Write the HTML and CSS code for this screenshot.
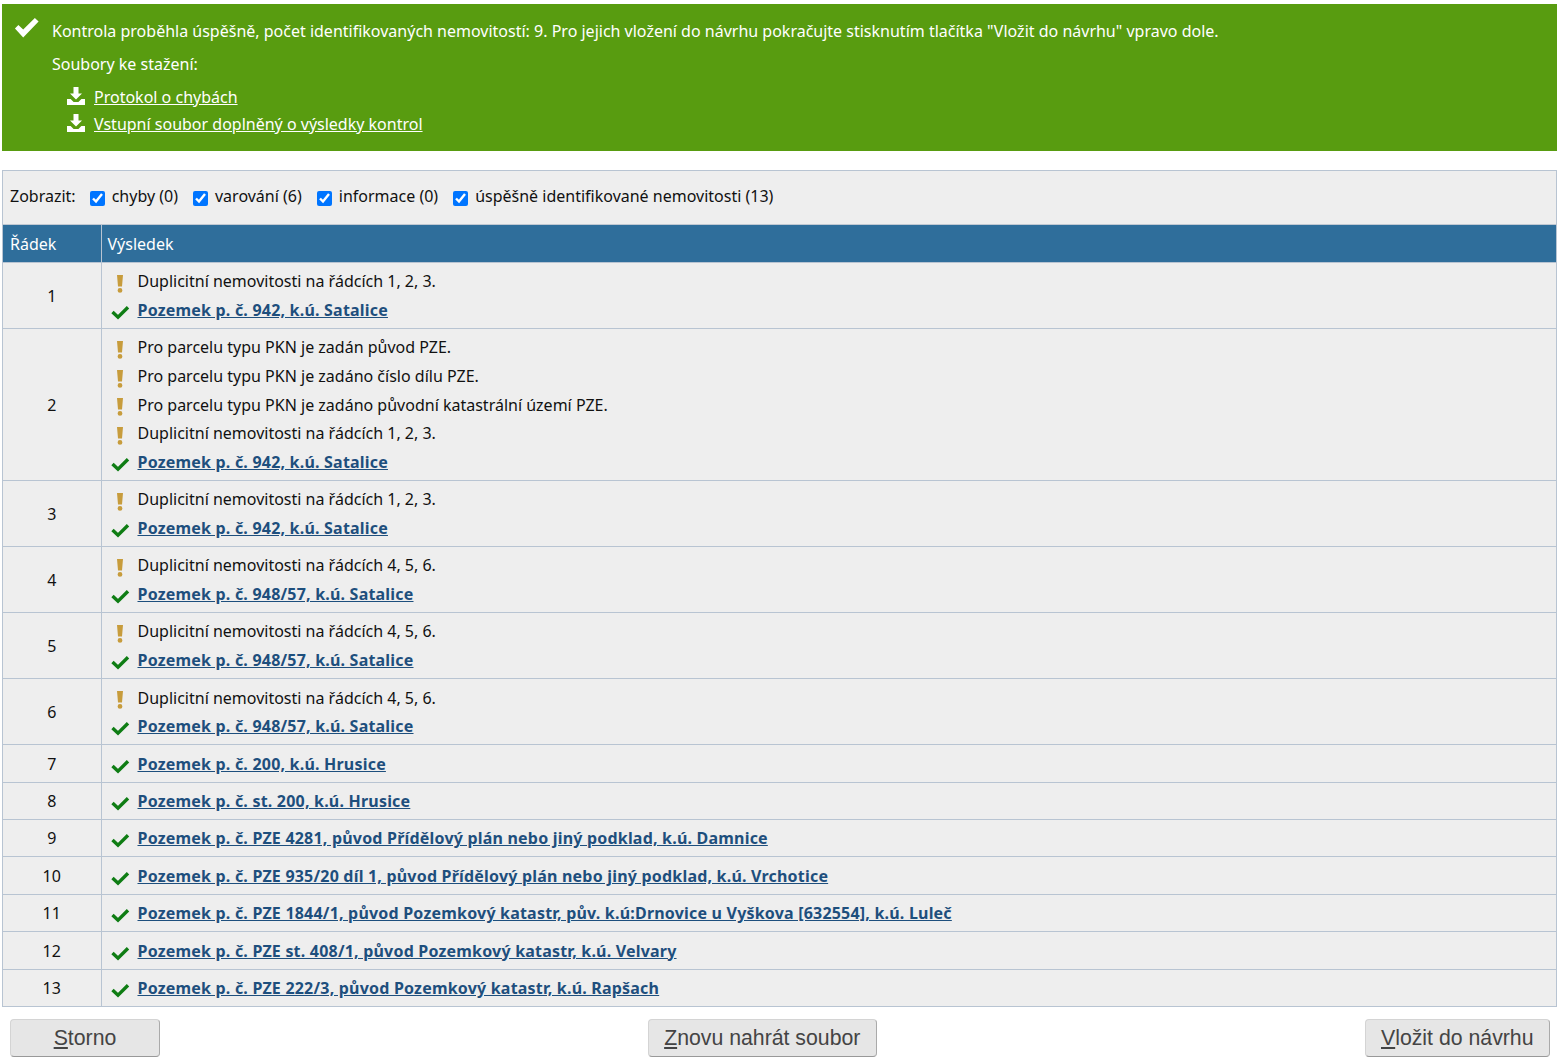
FILE: index.html
```html
<!DOCTYPE html>
<html lang="cs">
<head>
<meta charset="utf-8">
<title>Kontrola</title>
<link rel="stylesheet" href="styles.css">
</head>
<body>
<svg class="defs" width="0" height="0" aria-hidden="true">
  <symbol id="ok" viewBox="0 0 24 20"><path d="M1.5 10.5 4.6 7.3 9 11.4 19.6.9 23 4.2 9 18.6Z"/></symbol>
  <symbol id="tick" viewBox="0 0 19 16"><path d="M1.5 8 7 13.2 17 3.2" fill="none" stroke="currentColor" stroke-width="3.4"/></symbol>
  <symbol id="warn" viewBox="0 0 8 18"><path d="M1 0h6L6 11.5H2ZM4 13a2.4 2.4 0 1 1 0 4.8A2.4 2.4 0 0 1 4 13Z"/></symbol>
  <symbol id="dl" viewBox="0 0 18 18"><path d="M6.5 0h5v6.5H15L9 12.5 3 6.5h3.5ZM0 12h3.6l3 3h4.8l3-3H18v6H0Z"/></symbol>
</svg>
<section class="alert">
  <svg class="alert-icon"><use href="#ok"/></svg>
  <div class="alert-body">
    <p>Kontrola proběhla úspěšně, počet identifikovaných nemovitostí: 9. Pro jejich vložení do návrhu pokračujte stisknutím tlačítka "Vložit do návrhu" vpravo dole.</p>
    <p>Soubory ke stažení:</p>
    <ul class="files">
      <li><svg class="dl"><use href="#dl"/></svg><a href="#">Protokol o chybách</a></li>
      <li><svg class="dl"><use href="#dl"/></svg><a href="#">Vstupní soubor doplněný o výsledky kontrol</a></li>
    </ul>
  </div>
</section>
<section class="panel">
  <div class="filters">
    <span class="filters-label">Zobrazit:</span>
    <label><input type="checkbox" checked>chyby (0)</label>
    <label><input type="checkbox" checked>varování (6)</label>
    <label><input type="checkbox" checked>informace (0)</label>
    <label><input type="checkbox" checked>úspěšně identifikované nemovitosti (13)</label>
  </div>
  <table>
    <thead><tr><th class="c1">Řádek</th><th>Výsledek</th></tr></thead>
    <tbody>
      <tr><td class="c1">1</td><td>
        <div class="m"><svg class="w"><use href="#warn"/></svg>Duplicitní nemovitosti na řádcích 1, 2, 3.</div>
        <div class="m"><svg class="k"><use href="#tick"/></svg><a href="#">Pozemek p. č. 942, k.ú. Satalice</a></div>
      </td></tr>
      <tr><td class="c1">2</td><td>
        <div class="m"><svg class="w"><use href="#warn"/></svg>Pro parcelu typu PKN je zadán původ PZE.</div>
        <div class="m"><svg class="w"><use href="#warn"/></svg>Pro parcelu typu PKN je zadáno číslo dílu PZE.</div>
        <div class="m"><svg class="w"><use href="#warn"/></svg>Pro parcelu typu PKN je zadáno původní katastrální území PZE.</div>
        <div class="m"><svg class="w"><use href="#warn"/></svg>Duplicitní nemovitosti na řádcích 1, 2, 3.</div>
        <div class="m"><svg class="k"><use href="#tick"/></svg><a href="#">Pozemek p. č. 942, k.ú. Satalice</a></div>
      </td></tr>
      <tr><td class="c1">3</td><td>
        <div class="m"><svg class="w"><use href="#warn"/></svg>Duplicitní nemovitosti na řádcích 1, 2, 3.</div>
        <div class="m"><svg class="k"><use href="#tick"/></svg><a href="#">Pozemek p. č. 942, k.ú. Satalice</a></div>
      </td></tr>
      <tr><td class="c1">4</td><td>
        <div class="m"><svg class="w"><use href="#warn"/></svg>Duplicitní nemovitosti na řádcích 4, 5, 6.</div>
        <div class="m"><svg class="k"><use href="#tick"/></svg><a href="#">Pozemek p. č. 948/57, k.ú. Satalice</a></div>
      </td></tr>
      <tr><td class="c1">5</td><td>
        <div class="m"><svg class="w"><use href="#warn"/></svg>Duplicitní nemovitosti na řádcích 4, 5, 6.</div>
        <div class="m"><svg class="k"><use href="#tick"/></svg><a href="#">Pozemek p. č. 948/57, k.ú. Satalice</a></div>
      </td></tr>
      <tr><td class="c1">6</td><td>
        <div class="m"><svg class="w"><use href="#warn"/></svg>Duplicitní nemovitosti na řádcích 4, 5, 6.</div>
        <div class="m"><svg class="k"><use href="#tick"/></svg><a href="#">Pozemek p. č. 948/57, k.ú. Satalice</a></div>
      </td></tr>
      <tr><td class="c1">7</td><td><div class="m"><svg class="k"><use href="#tick"/></svg><a href="#">Pozemek p. č. 200, k.ú. Hrusice</a></div></td></tr>
      <tr><td class="c1">8</td><td><div class="m"><svg class="k"><use href="#tick"/></svg><a href="#">Pozemek p. č. st. 200, k.ú. Hrusice</a></div></td></tr>
      <tr><td class="c1">9</td><td><div class="m"><svg class="k"><use href="#tick"/></svg><a href="#">Pozemek p. č. PZE 4281, původ Přídělový plán nebo jiný podklad, k.ú. Damnice</a></div></td></tr>
      <tr><td class="c1">10</td><td><div class="m"><svg class="k"><use href="#tick"/></svg><a href="#">Pozemek p. č. PZE 935/20 díl 1, původ Přídělový plán nebo jiný podklad, k.ú. Vrchotice</a></div></td></tr>
      <tr><td class="c1">11</td><td><div class="m"><svg class="k"><use href="#tick"/></svg><a href="#">Pozemek p. č. PZE 1844/1, původ Pozemkový katastr, pův. k.ú:Drnovice u Vyškova [632554], k.ú. Luleč</a></div></td></tr>
      <tr><td class="c1">12</td><td><div class="m"><svg class="k"><use href="#tick"/></svg><a href="#">Pozemek p. č. PZE st. 408/1, původ Pozemkový katastr, k.ú. Velvary</a></div></td></tr>
      <tr><td class="c1">13</td><td><div class="m"><svg class="k"><use href="#tick"/></svg><a href="#">Pozemek p. č. PZE 222/3, původ Pozemkový katastr, k.ú. Rapšach</a></div></td></tr>
    </tbody>
  </table>
</section>
<footer class="actions">
  <button type="button"><u>S</u>torno</button>
  <button type="button"><u>Z</u>novu nahrát soubor</button>
  <button type="button"><u>V</u>ložit do návrhu</button>
</footer>
</body>
</html>
```
FILE: styles.css
```css
html, body { margin: 0; padding: 0; background: #fff; }
body {
  padding: 4px 1px 0 2px;
  font-family: "Noto Sans", "Open Sans", sans-serif;
  font-size: 16px;
  color: #111;
  height: 1056px;
  overflow: hidden;
}
.defs { position: absolute; }
svg { fill: currentColor; }

.alert {
  display: flex;
  background: #589c10;
  color: #fff;
  height: 147px;
  box-sizing: border-box;
  padding: 16px 0 0 11px;
}
.alert a { color: #fff; }
.alert-icon { width: 27px; height: 22px; margin: -3px 12px 0 0; flex: none; }
.alert-body { flex: 1; }
.alert-body p { margin: 0 0 11px; line-height: 22px; }
.files { list-style: none; margin: 0; padding: 0 0 0 15px; }
.files li { height: 27px; line-height: 22px; display: flex; align-items: flex-start; }
.dl { width: 18px; height: 18px; margin: 1px 9px 0 0; flex: none; }

.panel {
  margin-top: 19px;
  border: 1px solid #b8c4d2;
  background: #eee;
}
.filters {
  height: 54px;
  display: flex;
  align-items: center;
  padding: 0 0 4px 7px;
  gap: 15px;
  box-sizing: border-box;
  border-bottom: 1px solid #c0c8d2;
}
.filters-label { margin-right: -1px; }
.filters label { display: flex; align-items: center; }
.filters input { width: 15px; height: 15px; margin: 6px 7px 0 0; accent-color: #0075ff; }

table { width: 100%; border-collapse: collapse; table-layout: fixed; }
th, td { border: 1px solid #b8c4d2; padding: 4px 6px 3.74px; text-align: left; font-weight: 400; }
tr > :first-child { border-left: 0; }
tr > :last-child { border-right: 0; }
tbody tr:last-child td { border-bottom: 0; }
th {
  background: #2f6e9b;
  color: #fff;
  height: 37px;
  padding: 1px 6px 0;
  box-sizing: border-box;
  border-top: 0;
  border-bottom: 0;
  line-height: 36px;
}
th.c1 { padding-left: 7px; }
.c1 { width: 98px; }
td.c1 { text-align: center; }
.m {
  display: flex;
  align-items: center;
  height: 28.67px;
  padding-left: 3px;
}
.m a { color: #1e4f7d; font-weight: 700; letter-spacing: 0.2px; }
.w { width: 8px; height: 18px; margin: 5px 14px 0 5px; color: #c79c3c; flex: none; }
.k { width: 19px; height: 16px; margin: 4px 8px 0 0; color: #0f7d14; flex: none; }

.actions {
  display: flex;
  justify-content: space-between;
  padding: 12px 7px 0 8px;
}
button {
  font-family: "Liberation Sans", Arial, sans-serif;
  font-size: 21.28px;
  color: #444;
  height: 38px;
  padding: 1px 15.5px 0;
  background: #e6e6e6;
  border: 1px solid #d4d4d4;
  border-bottom-color: #999;
  border-right-color: #aaa;
  border-radius: 4px;
}
.actions button:first-child { width: 150px; }
```
